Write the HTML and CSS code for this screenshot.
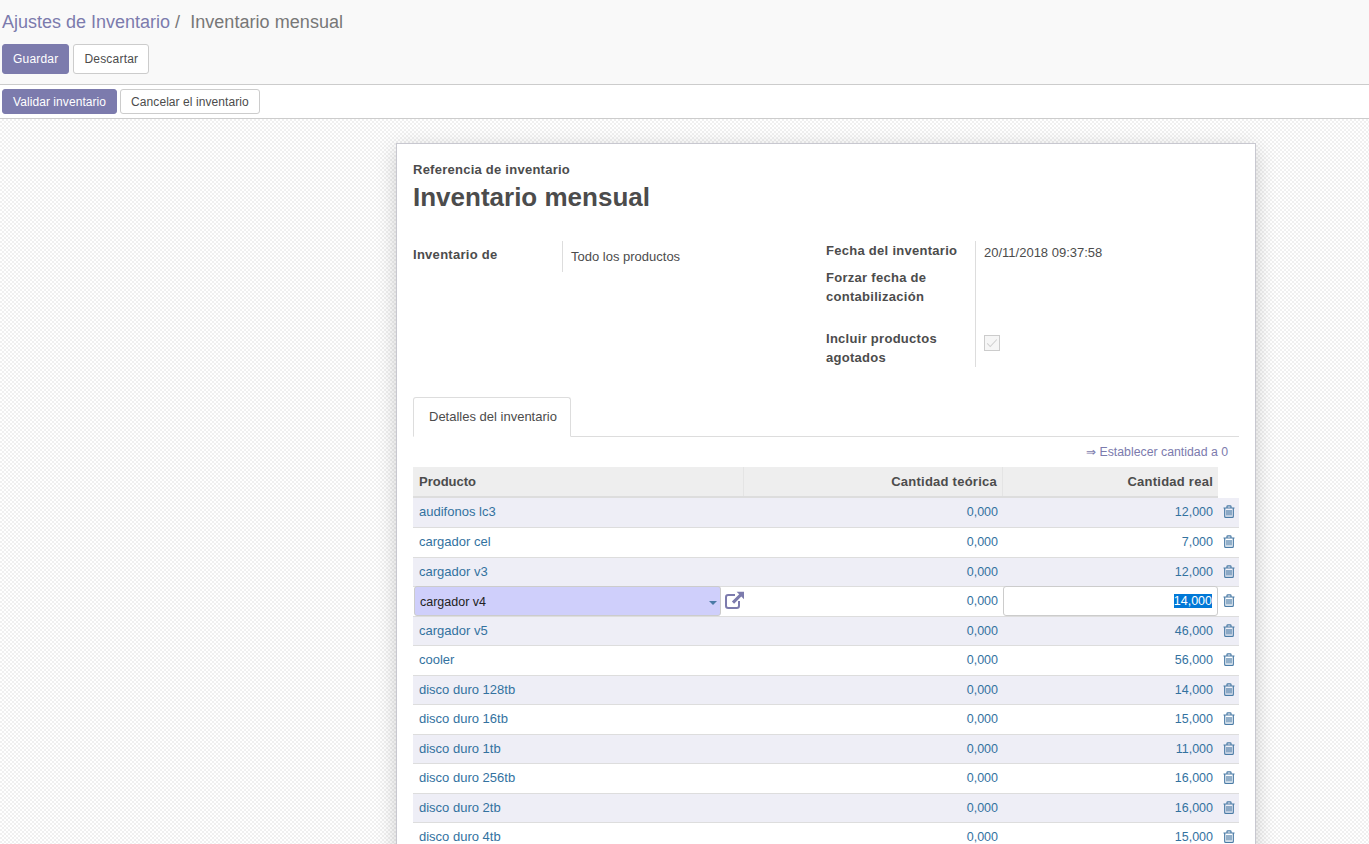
FILE: index.html
```html
<!DOCTYPE html>
<html lang="es">
<head>
<meta charset="utf-8">
<title>Inventario mensual</title>
<link rel="stylesheet" href="styles.css">
</head>
<body>
<svg class="defs" aria-hidden="true">
  <symbol id="trash" viewBox="0 0 12 13">
    <path d="M.5 3h11M4 3V1.6Q4 .8 4.8 .8h2.4Q8 .8 8 1.6V3M1.7 3v8.4q0 1 1 1h6.6q1 0 1-1V3M4 5v5.5M6 5v5.5M8 5v5.5" fill="none" stroke="currentColor" stroke-width="1.2"/>
  </symbol>
</svg>
<header class="control-panel">
  <div class="breadcrumb"><a class="crumb-link">Ajustes de Inventario</a><span class="crumb-sep">/</span><span class="crumb-active">Inventario mensual</span></div>
  <div class="actions">
    <button class="btn btn-primary btn-large">Guardar</button>
    <button class="btn btn-default btn-large">Descartar</button>
  </div>
</header>
<div class="statusbar">
  <button class="btn btn-primary btn-small">Validar inventario</button>
  <button class="btn btn-default btn-small">Cancelar el inventario</button>
</div>
<main class="content">
  <section class="sheet">
    <div class="title-label">Referencia de inventario</div>
    <h1 class="title">Inventario mensual</h1>
    <div class="groups">
      <div class="group group-left">
        <div class="label label-single">Inventario de</div>
        <div class="value value-single">Todo los productos</div>
      </div>
      <div class="group group-right">
        <div class="label l-date">Fecha del inventario</div>
        <div class="value v-date">20/11/2018 09:37:58</div>
        <div class="label l-force">Forzar fecha de contabilización</div>
        <div class="value v-force"></div>
        <div class="label l-inc">Incluir productos agotados</div>
        <div class="value v-inc">
          <span class="checkbox"><svg viewBox="0 0 16 16" width="14" height="14"><path d="M2.5 8.5l3.5 3.5 7.5-8" fill="none" stroke="#d0d0d0" stroke-width="1.2"/></svg></span>
        </div>
      </div>
    </div>
    <div class="tabs"><div class="tab">Detalles del inventario</div></div>
    <div class="set-zero"><a>⇒ Establecer cantidad a 0</a></div>
    <div class="list">
      <div class="row head">
        <div class="cell c-name">Producto</div>
        <div class="cell c-theo">Cantidad teórica</div>
        <div class="cell c-real">Cantidad real</div>
      </div>
      <div class="row odd"><div class="cell c-name">audifonos lc3</div><div class="cell c-theo">0,000</div><div class="cell c-real">12,000</div><div class="cell c-del"><svg class="trash"><use href="#trash"/></svg></div></div>
      <div class="row"><div class="cell c-name">cargador cel</div><div class="cell c-theo">0,000</div><div class="cell c-real">7,000</div><div class="cell c-del"><svg class="trash"><use href="#trash"/></svg></div></div>
      <div class="row odd"><div class="cell c-name">cargador v3</div><div class="cell c-theo">0,000</div><div class="cell c-real">12,000</div><div class="cell c-del"><svg class="trash"><use href="#trash"/></svg></div></div>
      <div class="row editing">
        <div class="cell c-edit-name">
          <div class="select-box"><span>cargador v4</span><i class="caret"></i></div>
          <svg class="ext" viewBox="0 0 20 18" width="20" height="18"><path d="M11 4H4.2Q2 4 2 6.2v8.6Q2 17 4.2 17h8.6q2.2 0 2.2-2.2V10" fill="none" stroke="#7c7bad" stroke-width="2"/><path d="M12.6 .8H20v7.4l-2.7-2.7-7.2 7.3-2.2-2.2 7.3-7.3z" fill="#7c7bad"/></svg>
        </div>
        <div class="cell c-theo">0,000</div>
        <div class="cell c-edit-real"><div class="qty-box"><span class="selected">14,000</span></div></div>
        <div class="cell c-del"><svg class="trash"><use href="#trash"/></svg></div>
      </div>
      <div class="row odd"><div class="cell c-name">cargador v5</div><div class="cell c-theo">0,000</div><div class="cell c-real">46,000</div><div class="cell c-del"><svg class="trash"><use href="#trash"/></svg></div></div>
      <div class="row"><div class="cell c-name">cooler</div><div class="cell c-theo">0,000</div><div class="cell c-real">56,000</div><div class="cell c-del"><svg class="trash"><use href="#trash"/></svg></div></div>
      <div class="row odd"><div class="cell c-name">disco duro 128tb</div><div class="cell c-theo">0,000</div><div class="cell c-real">14,000</div><div class="cell c-del"><svg class="trash"><use href="#trash"/></svg></div></div>
      <div class="row"><div class="cell c-name">disco duro 16tb</div><div class="cell c-theo">0,000</div><div class="cell c-real">15,000</div><div class="cell c-del"><svg class="trash"><use href="#trash"/></svg></div></div>
      <div class="row odd"><div class="cell c-name">disco duro 1tb</div><div class="cell c-theo">0,000</div><div class="cell c-real">11,000</div><div class="cell c-del"><svg class="trash"><use href="#trash"/></svg></div></div>
      <div class="row"><div class="cell c-name">disco duro 256tb</div><div class="cell c-theo">0,000</div><div class="cell c-real">16,000</div><div class="cell c-del"><svg class="trash"><use href="#trash"/></svg></div></div>
      <div class="row odd"><div class="cell c-name">disco duro 2tb</div><div class="cell c-theo">0,000</div><div class="cell c-real">16,000</div><div class="cell c-del"><svg class="trash"><use href="#trash"/></svg></div></div>
      <div class="row"><div class="cell c-name">disco duro 4tb</div><div class="cell c-theo">0,000</div><div class="cell c-real">15,000</div><div class="cell c-del"><svg class="trash"><use href="#trash"/></svg></div></div>
    </div>
  </section>
</main>
</body>
</html>
```
FILE: styles.css
```css
* { box-sizing: border-box; }
html, body { height: 100%; }
body {
  margin: 0;
  height: 844px;
  overflow: hidden;
  display: flex;
  flex-direction: column;
  font: 13px/18px "Liberation Sans", Arial, sans-serif;
  color: #4c4c4c;
  background: #fff;
}
.defs { display: none; }

.control-panel {
  height: 85px;
  flex: none;
  padding: 12px 2px 0;
  background: #f9f9f9;
  border-bottom: 1px solid #ccc;
}
.breadcrumb { font-size: 18px; line-height: 20px; display: flex; }
.crumb-link { color: #7c7bad; }
.crumb-sep { color: #777; margin: 0 10px 0 5px; }
.crumb-active { color: #777; letter-spacing: .05px; }
.actions { margin-top: 12px; display: flex; gap: 4px; }

.btn {
  font: 12px/18px "Liberation Sans", Arial, sans-serif;
  letter-spacing: .07px;
  border: 1px solid #ccc;
  border-radius: 3px;
  padding: 0 10px;
  background: #fff;
  color: #4c4c4c;
}
.btn-primary { background: #7c7bad; border-color: #7c7bad; color: #fff; }
.btn-large { height: 30px; letter-spacing: .2px; }
.btn-small { height: 25px; }

.statusbar {
  height: 34px;
  flex: none;
  display: flex;
  gap: 3px;
  padding: 4px 2px 0;
  background: #fff;
  border-bottom: 1px solid #ccc;
}

.content {
  flex: 1;
  min-height: 0;
  overflow: hidden;
  padding: 24px 113px 0 396px;
  background-color: #fff;
  background-image: repeating-conic-gradient(#f0f0f0 0 25%, #fff 0 50%);
  background-size: 4px 4px;
}
.sheet {
  width: 860px;
  padding: 17px 16px 0;
  background: #fff;
  border: 1px solid #c8c8d0;
  box-shadow: 0 5px 20px -1px rgba(0, 0, 0, .2);
  min-height: 800px;
}
.title-label { font-weight: bold; font-size: 13px; line-height: 18px; letter-spacing: .25px; }
.title { margin: 0; font-size: 26px; line-height: 36px; font-weight: bold; }

.groups { display: flex; margin-top: 26px; height: 126px; }
.group-left {
  width: 413px;
  display: grid;
  grid-template-columns: 149px 1fr;
  grid-template-rows: 31px;
}
.group-right {
  flex: 1;
  display: grid;
  grid-template-columns: 149px 1fr;
  grid-template-rows: 25px 61px 40px;
}
.label { font-weight: bold; font-size: 13px; line-height: 19px; padding-right: 10px; letter-spacing: .28px; }
.value { border-left: 1px solid #ddd; padding-left: 8px; }
.label-single { padding-top: 4px; }
.value-single { padding-top: 7px; }
.l-date { padding-top: 0; }
.v-date { padding-top: 3px; }
.l-force { padding-top: 2px; }
.l-inc { padding-top: 2px; }
.v-inc { padding-top: 8px; }
.checkbox {
  display: flex;
  align-items: center;
  justify-content: center;
  width: 16px;
  height: 16px;
  border: 1px solid #ccc;
  background: #f6f6f6;
}

.tabs { margin-top: 30px; height: 40px; border-bottom: 1px solid #ddd; }
.tab {
  width: 158px;
  height: 40px;
  padding: 10px 15px;
  border: 1px solid #ddd;
  border-bottom-color: #fff;
  border-radius: 3px 3px 0 0;
  background: #fff;
  white-space: nowrap;
}
.set-zero { height: 30px; padding: 6px 11px 0 0; text-align: right; color: #7c7bad; font-size: 12.3px; }

.list { width: 826px; }
.row {
  display: grid;
  grid-template-columns: 330px 260px 215px 21px;
  height: 29.55px;
  border-bottom: 1px solid #ddd;
  color: #33729f;
}
.row.odd { background: #eeeef6; }
.row.head {
  height: 31.45px;
  width: 805px;
  grid-template-columns: 330px 259px 216px;
  background: #eee;
  border-bottom: 2px solid #ddd;
  color: #4c4c4c;
  font-weight: bold;
  font-size: 13px;
  letter-spacing: .25px;
}
.head .cell { padding-top: 6px; padding-bottom: 0; border-left: 1px solid #e4e4e4; }
.head .c-name { border-left: 0; letter-spacing: 0; }
.cell { padding: 5px 5px 0; white-space: nowrap; }
.c-name { padding-left: 6px; }
.c-theo, .c-real { text-align: right; font-size: 12.5px; }
.head .c-theo, .head .c-real { font-size: 13px; }
.c-del { padding: 5px 0 0 5px; }
.trash { display: block; width: 12px; height: 13px; margin-top: 2px; color: #4a7ba6; }

.row.editing { background: #fff; }
.c-edit-name { display: flex; padding: 0; align-items: flex-start; }
.select-box {
  flex: none;
  width: 307px;
  height: 30px;
  margin: -1px 0 0 1px;
  padding: 6px 3px 4px 5px;
  display: flex;
  align-items: center;
  justify-content: space-between;
  background: #cfcffb;
  border: 1px solid #ccc;
  border-radius: 3px;
  color: #222;
  font-size: 12.5px;
}
.caret {
  width: 0;
  height: 0;
  margin-top: 1px;
  border: 4px solid transparent;
  border-top-color: #4a7ba6;
  border-bottom: 0;
}
.ext { flex: none; margin: 4px 0 0 3px; }
.c-edit-real { padding: 0; }
.qty-box {
  width: 215px;
  height: 30px;
  margin-top: -1px;
  padding: 5px 5px;
  border: 1px solid #ccc;
  border-radius: 3px;
  background: #fff;
  color: #4a7ba6;
  text-align: right;
  font-size: 12.5px;
}
.selected { background: #0078d7; color: #fff; }
```
